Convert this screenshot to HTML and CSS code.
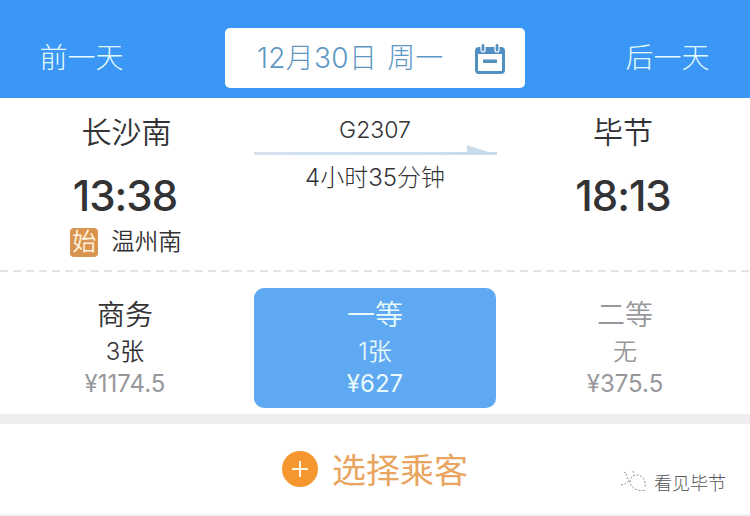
FILE: index.html
```html
<!DOCTYPE html>
<html lang="zh">
<head>
<meta charset="utf-8">
<title>G2307</title>
<link rel="stylesheet" href="styles.css">
</head>
<body>
<div class="page">
  <header class="topbar">
    <div class="nav nav-prev">前一天</div>
    <div class="datebox">
      <span class="date"><span class="date-day">12月30日</span><span>周一</span></span>
      <svg class="cal" width="32" height="32" viewBox="0 0 32 32" aria-hidden="true">
        <rect x="2.5" y="6.5" width="27" height="24" rx="2.5" fill="#fff" stroke="#5290bf" stroke-width="3"/>
        <rect x="2.5" y="6" width="27" height="6" fill="#4f8fc4"/>
        <rect x="7" y="1.5" width="4" height="8.5" rx="2" fill="#5290bf" stroke="#fff" stroke-width="1.2"/>
        <rect x="21" y="1.5" width="4" height="8.5" rx="2" fill="#5290bf" stroke="#fff" stroke-width="1.2"/>
        <rect x="9" y="17.5" width="14" height="3.5" fill="#5290bf"/>
      </svg>
    </div>
    <div class="nav">后一天</div>
  </header>

  <section class="route">
    <div class="stop">
      <div class="station station-start">长沙南</div>
      <div class="time">13:38</div>
      <div class="origin"><span class="badge">始</span><span>温州南</span></div>
    </div>
    <div class="trip">
      <div class="train">G2307</div>
      <div class="arrow"></div>
      <div class="duration">4小时35分钟</div>
    </div>
    <div class="stop stop-end">
      <div class="station">毕节</div>
      <div class="time">18:13</div>
    </div>
  </section>

  <section class="seats">
    <div class="seat">
      <div class="seat-name">商务</div>
      <div class="seat-count">3张</div>
      <div class="seat-price">¥1174.5</div>
    </div>
    <div class="seat seat-active">
      <div class="seat-name">一等</div>
      <div class="seat-count">1张</div>
      <div class="seat-price">¥627</div>
    </div>
    <div class="seat seat-none">
      <div class="seat-name">二等</div>
      <div class="seat-count">无</div>
      <div class="seat-price">¥375.5</div>
    </div>
  </section>

  <section class="passenger">
    <span class="plus"></span>
    <span class="passenger-label">选择乘客</span>
    <div class="watermark">
      <svg width="28" height="22" viewBox="0 0 28 22" aria-hidden="true">
        <g fill="none" stroke="#8f8f8f" stroke-width="1" stroke-dasharray="2 1.6">
          <path d="M1 14c3 0 5-2 7-4"/>
          <path d="M6 3c2 5 4 12 9 15 4 2 8 2 11 1"/>
          <path d="M10 11c0-5 4-8 8-7 5 1 8 6 7 12"/>
          <path d="M4 1l3 2M13 0l1 3"/>
        </g>
      </svg>
      <span>看见毕节</span>
    </div>
  </section>
</div>
</body>
</html>
```
FILE: styles.css
```css
* { box-sizing: border-box; }
html, body { margin: 0; padding: 0; }
body {
  width: 750px;
  height: 516px;
  overflow: hidden;
  background: #fff;
  font-family: "Inter", "Noto Sans CJK SC", sans-serif;
  color: #333336;
}
.page { display: flex; flex-direction: column; width: 750px; height: 516px; }

.topbar {
  height: 98px;
  background: #3b97f6;
  display: grid;
  grid-template-columns: 165px 1fr 165px;
  align-items: start;
  padding-top: 28px;
}
.nav {
  font-size: 28px;
  line-height: 60px;
  font-weight: 300;
  color: #e4fbfb;
  text-align: center;
  height: 60px;
}
.nav-prev { padding-right: 2px; }
.datebox {
  width: 300px;
  height: 60px;
  margin: 0 auto;
  display: flex;
  align-items: center;
  background: #fff;
  border-radius: 5px;
  padding: 0 19px 0 32px;
  justify-content: space-between;
  color: #5e97c4;
}
.date { display: flex; gap: 10px; font-size: 28px; font-weight: 300; white-space: nowrap; padding-bottom: 4px; }
.date-day { letter-spacing: 0.3px; }
.cal { display: block; }

.route {
  height: 174px;
  display: grid;
  grid-template-columns: repeat(3, 250px);
  padding-bottom: 2px;
  background: repeating-linear-gradient(90deg, #e4e4e6 0 8px, transparent 8px 13px) bottom / 100% 2px no-repeat;
}
.stop { display: flex; flex-direction: column; align-items: center; padding-top: 13px; }
.stop-end { padding-right: 4px; }
.station { font-size: 30px; line-height: 42px; height: 42px; font-weight: 350; }
.station-start { margin-left: 3px; }
.time {
  font-size: 42px;
  line-height: 48px;
  height: 48px;
  margin-top: 19px;
  font-weight: 500;
  letter-spacing: -1px;
}
.origin { display: flex; align-items: center; gap: 13px; font-size: 23.5px; line-height: 30px; margin-top: 7px; margin-left: 2px; font-weight: 350; }
.badge {
  width: 28px;
  height: 29px;
  border-radius: 4px;
  background: #d9954f;
  color: #fff3e0;
  font-size: 24px;
  line-height: 27px;
  text-align: center;
}
.trip { display: flex; flex-direction: column; align-items: center; padding-top: 18px; }
.train { font-size: 23px; line-height: 28px; font-weight: 300; }
.arrow {
  position: relative;
  width: 243px;
  height: 3px;
  margin-top: 8px;
  background: linear-gradient(90deg, #d5e3ef, #c9dcec);
}
.arrow::after {
  content: "";
  position: absolute;
  right: -1px;
  bottom: 0;
  width: 31px;
  height: 10px;
  background: #c9dcec;
  clip-path: polygon(0 0, 100% 100%, 0 100%);
}
.duration { font-size: 24px; line-height: 30px; margin-top: 8px; font-weight: 300; }

.seats {
  height: 142px;
  display: grid;
  grid-template-columns: repeat(3, 250px);
  align-items: start;
  justify-items: center;
  padding-top: 16px;
}
.seat {
  width: 242px;
  height: 120px;
  border-radius: 10px;
  display: flex;
  flex-direction: column;
  align-items: center;
  padding-top: 7px;
}
.seat-name { font-size: 28px; line-height: 40px; font-weight: 350; }
.seat-count { font-size: 24px; line-height: 32px; margin-top: 1px; font-weight: 350; }
.seat-price { font-size: 24px; line-height: 28px; color: #98989c; margin-top: 2px; }
.seat-active { background: #5fa8f2; color: #e8fbfc; }
.seat-active .seat-price { color: #e8fbfc; }
.seat-none { color: #98989c; }

.passenger {
  position: relative;
  height: 102px;
  border-top: 10px solid #eeeef0;
  border-bottom: 2px solid #f0f0f2;
  display: flex;
  align-items: center;
  justify-content: center;
  gap: 14px;
}
.plus {
  position: relative;
  width: 36px;
  height: 36px;
  border-radius: 50%;
  background: #f5962f;
}
.plus::before, .plus::after {
  content: "";
  position: absolute;
  background: #fff6e8;
  left: 10px;
  top: 17px;
  width: 16px;
  height: 2px;
}
.plus::after { transform: rotate(90deg); }
.passenger-label { font-size: 34px; color: #e9a55f; line-height: 44px; padding-top: 3px; }
.watermark {
  position: absolute;
  left: 620px;
  top: 45px;
  display: flex;
  align-items: center;
  gap: 6px;
  font-size: 18px;
  font-weight: 300;
  color: #555;
}
```
